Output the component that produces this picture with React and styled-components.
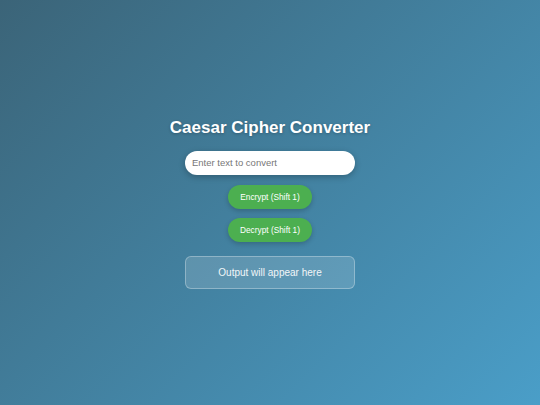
import React from "react";
import styled, { createGlobalStyle } from "styled-components";

const GlobalStyle = createGlobalStyle`
  html, body {
    margin: 0;
    padding: 0;
  }
  body {
    font-family: "Liberation Sans", Arial, sans-serif;
  }
`;

const Page = styled.div`
  display: flex;
  flex-direction: column;
  align-items: center;
  justify-content: center;
  width: 100vw;
  height: 100vh;
  background: linear-gradient(135deg, #3b6478 0%, #4a9ec8 100%);
  color: white;
`;

const Title = styled.h1`
  margin: 0 0 13px;
  font-size: 17px;
  line-height: 21px;
  font-weight: bold;
  text-shadow: 0 1px 3px rgba(0, 0, 0, 0.25);
`;

const TextInput = styled.input`
  box-sizing: border-box;
  width: 170px;
  height: 24px;
  padding: 0 7px;
  border: none;
  border-radius: 12px;
  background: white;
  font-family: inherit;
  font-size: 9.5px;
  color: #333;
  outline: none;
  box-shadow: 0 2px 6px rgba(0, 0, 0, 0.25);
  margin-bottom: 10px;

  &::placeholder {
    color: #777;
  }
`;

const ActionButton = styled.button`
  width: 84px;
  height: 24px;
  border: none;
  border-radius: 12px;
  background: #4caf50;
  color: white;
  font-family: inherit;
  font-size: 8.3px;
  cursor: pointer;
  box-shadow: 0 2px 5px rgba(0, 0, 0, 0.2);
  margin-bottom: ${props => props.$last ? "14px" : "9px"};
`;

const Output = styled.div`
  box-sizing: border-box;
  display: flex;
  align-items: center;
  justify-content: center;
  width: 170px;
  height: 33px;
  border: 1px solid rgba(255, 255, 255, 0.3);
  border-radius: 6px;
  background: rgba(255, 255, 255, 0.15);
  font-size: 10px;
  color: #f2f6f8;
`;

const App = () => {
  return (
    <Page>
      <GlobalStyle />
      <Title>Caesar Cipher Converter</Title>
      <TextInput type="text" placeholder="Enter text to convert" />
      <ActionButton>Encrypt (Shift 1)</ActionButton>
      <ActionButton $last>Decrypt (Shift 1)</ActionButton>
      <Output>Output will appear here</Output>
    </Page>
  );
};

export default App;
